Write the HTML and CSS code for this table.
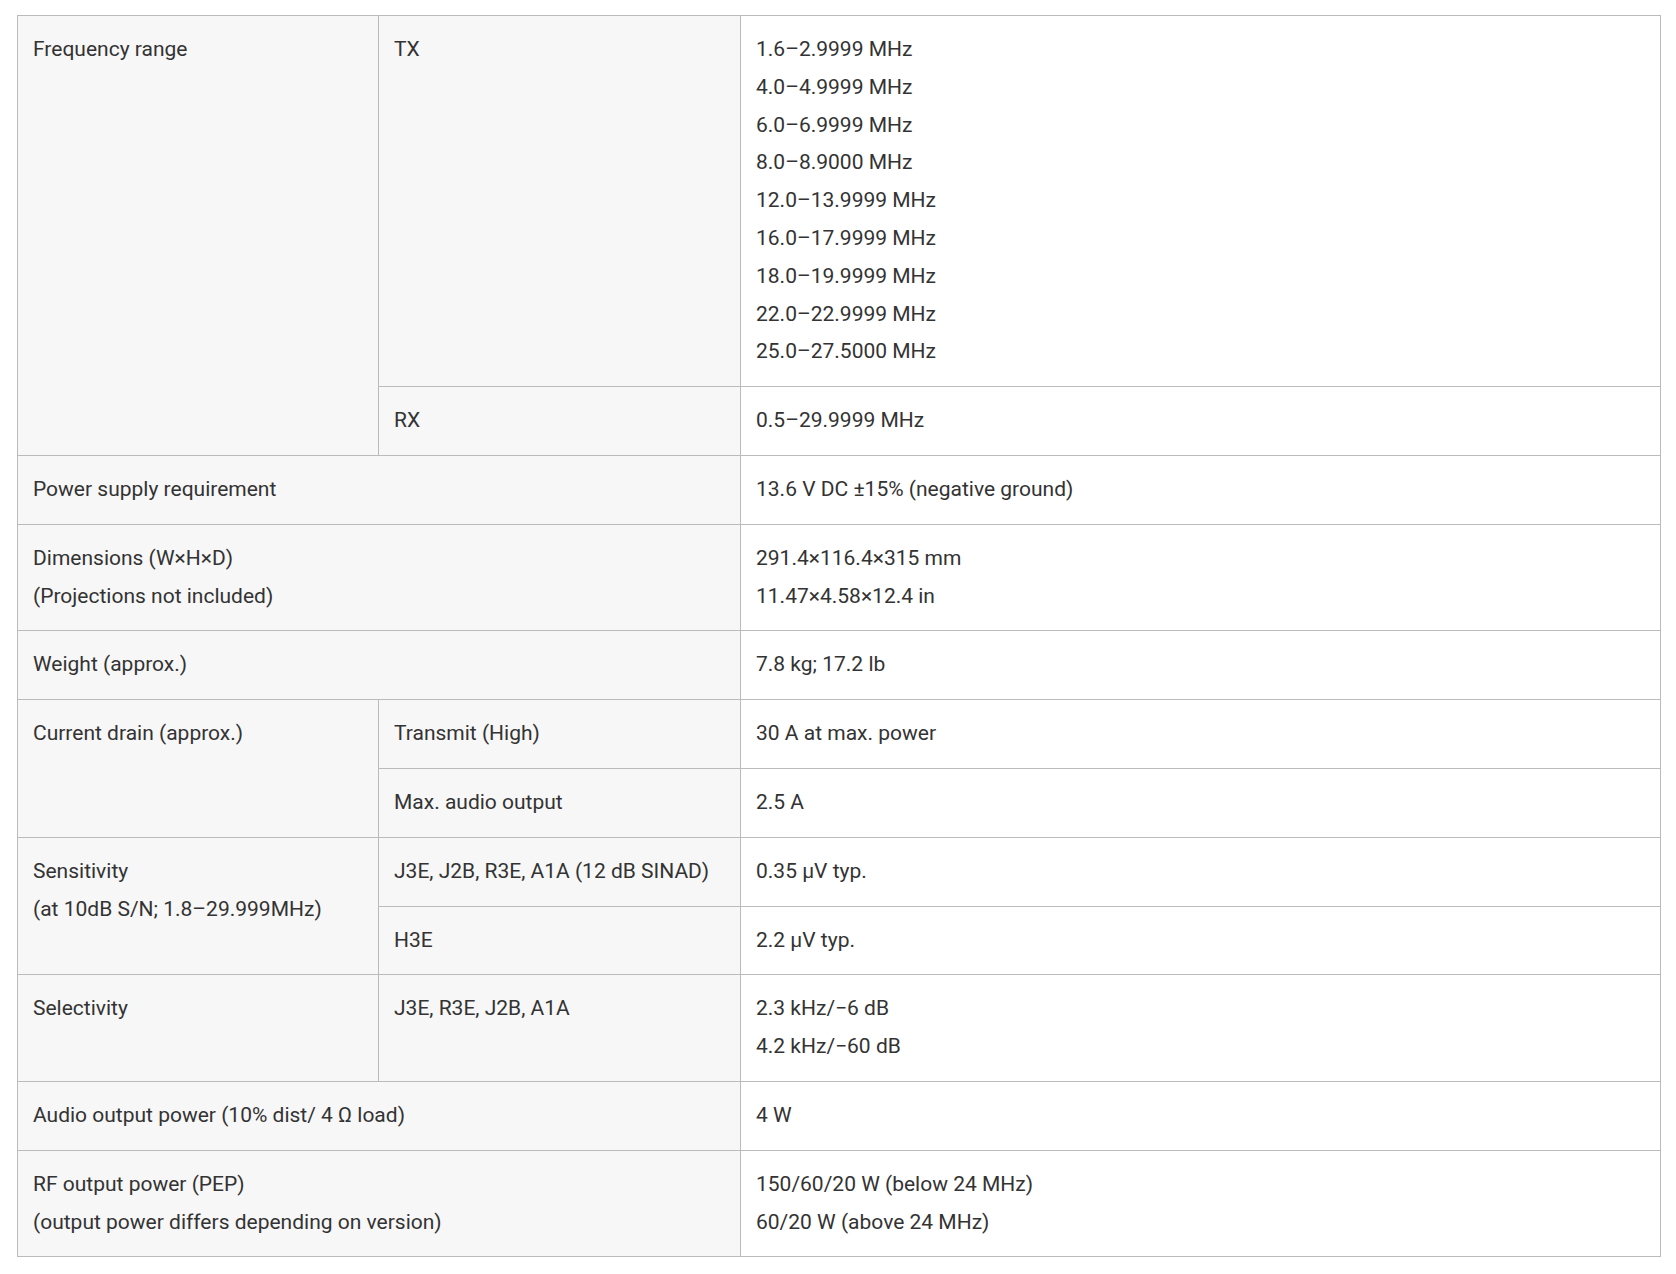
FILE: index.html
```html
<!DOCTYPE html>
<html>
<head>
<meta charset="utf-8">
<link rel="stylesheet" href="styles.css">
</head>
<body>
<table class="spec">
  <colgroup><col class="c1"><col class="c2"><col class="c3"></colgroup>
  <tbody>
    <tr>
      <th rowspan="2">Frequency range</th>
      <td class="sub">TX</td>
      <td>1.6–2.9999 MHz<br>4.0–4.9999 MHz<br>6.0–6.9999 MHz<br>8.0–8.9000 MHz<br>12.0–13.9999 MHz<br>16.0–17.9999 MHz<br>18.0–19.9999 MHz<br>22.0–22.9999 MHz<br>25.0–27.5000 MHz</td>
    </tr>
    <tr>
      <td class="sub">RX</td>
      <td>0.5–29.9999 MHz</td>
    </tr>
    <tr>
      <th colspan="2">Power supply requirement</th>
      <td>13.6 V DC ±15% (negative ground)</td>
    </tr>
    <tr>
      <th colspan="2">Dimensions (W×H×D)<br>(Projections not included)</th>
      <td>291.4×116.4×315 mm<br>11.47×4.58×12.4 in</td>
    </tr>
    <tr>
      <th colspan="2">Weight (approx.)</th>
      <td>7.8 kg; 17.2 lb</td>
    </tr>
    <tr>
      <th rowspan="2">Current drain (approx.)</th>
      <td class="sub">Transmit (High)</td>
      <td>30 A at max. power</td>
    </tr>
    <tr>
      <td class="sub">Max. audio output</td>
      <td>2.5 A</td>
    </tr>
    <tr>
      <th rowspan="2">Sensitivity<br>(at 10dB S/N; 1.8–29.999MHz)</th>
      <td class="sub">J3E, J2B, R3E, A1A (12 dB SINAD)</td>
      <td>0.35 μV typ.</td>
    </tr>
    <tr>
      <td class="sub">H3E</td>
      <td>2.2 μV typ.</td>
    </tr>
    <tr>
      <th>Selectivity</th>
      <td class="sub">J3E, R3E, J2B, A1A</td>
      <td>2.3 kHz/−6 dB<br>4.2 kHz/−60 dB</td>
    </tr>
    <tr>
      <th colspan="2">Audio output power (10% dist/ 4 Ω load)</th>
      <td>4 W</td>
    </tr>
    <tr>
      <th colspan="2">RF output power (PEP)<br>(output power differs depending on version)</th>
      <td>150/60/20 W (below 24 MHz)<br>60/20 W (above 24 MHz)</td>
    </tr>
  </tbody>
</table>
</body>
</html>
```

FILE: styles.css
```css
html, body {
  margin: 0;
  padding: 0;
  background: #ffffff;
}
body {
  padding: 15px 16px 18px 17px;
  font-family: Roboto, "Liberation Sans", sans-serif;
  color: #333333;
}
.spec {
  width: 1644px;
  border-collapse: collapse;
  table-layout: fixed;
  font-size: 21px;
  line-height: 37.8px;
}
.c1 { width: 361px; }
.c2 { width: 362px; }
.c3 { width: auto; }
.spec th, .spec td {
  border: 1px solid #bbbbbb;
  padding: 15px 15px;
  text-align: left;
  vertical-align: top;
  font-weight: 400;
}
.spec th, .spec td.sub {
  background: #f7f7f7;
}
.spec td {
  background: #ffffff;
}
```
